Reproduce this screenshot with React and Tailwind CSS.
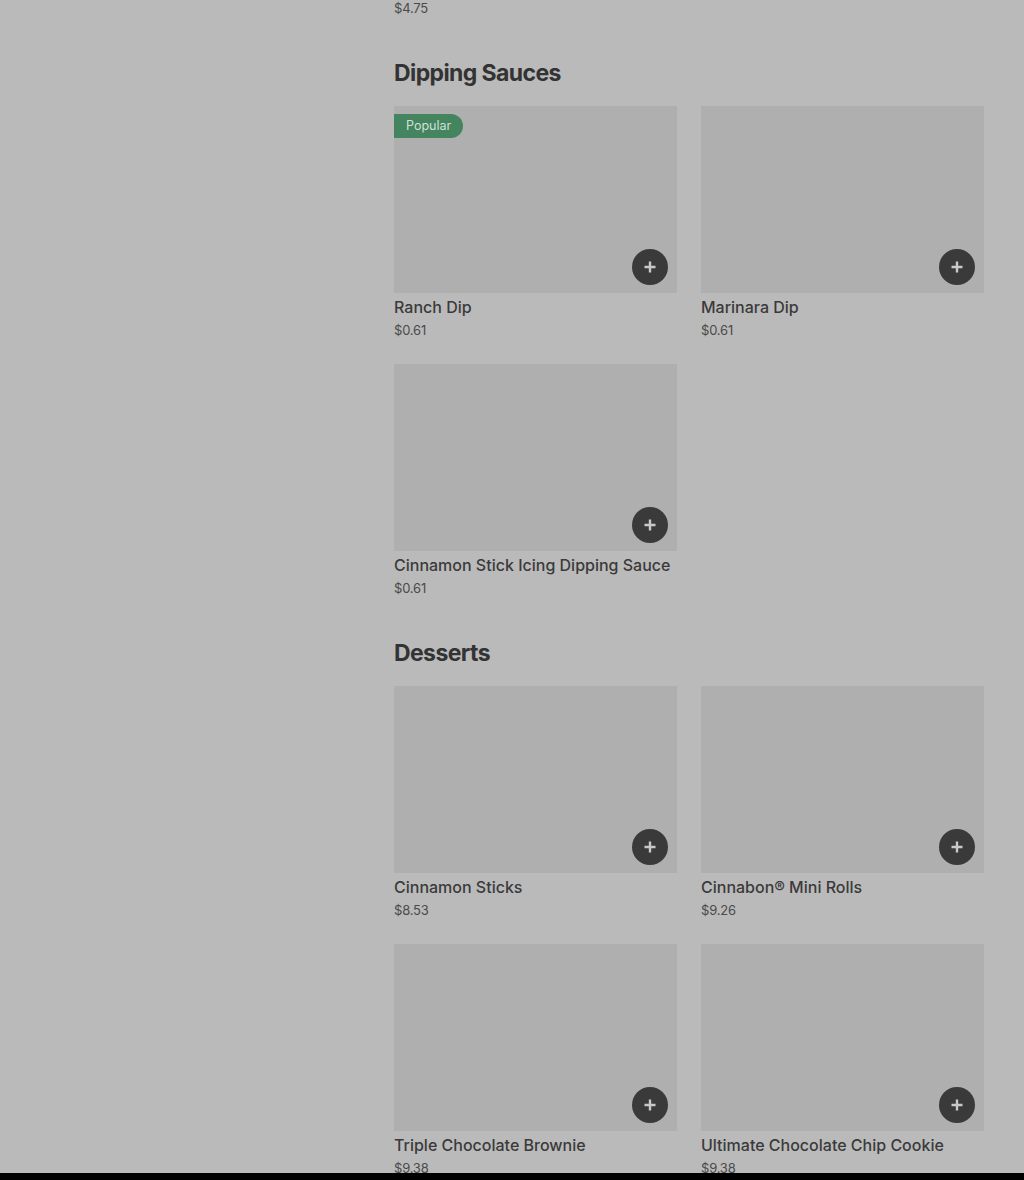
const sections = [
  {
    title: 'Dipping Sauces',
    items: [
      { name: 'Ranch Dip', price: '$0.61', popular: true },
      { name: 'Marinara Dip', price: '$0.61' },
      { name: 'Cinnamon Stick Icing Dipping Sauce', price: '$0.61' },
    ],
  },
  {
    title: 'Desserts',
    items: [
      { name: 'Cinnamon Sticks', price: '$8.53' },
      { name: 'Cinnabon® Mini Rolls', price: '$9.26' },
      { name: 'Triple Chocolate Brownie', price: '$9.38' },
      { name: 'Ultimate Chocolate Chip Cookie', price: '$9.38' },
    ],
  },
]

function PlusButton() {
  return (
    <button className="absolute bottom-[8px] right-[9px] grid h-9 w-9 place-items-center rounded-full bg-[#3a3a3a]">
      <svg width="14" height="14" viewBox="0 0 14 14" fill="none">
        <path d="M7 1.5v11M1.5 7h11" stroke="#c9c9c9" strokeWidth="2.4" />
      </svg>
    </button>
  )
}

function ItemCard({ item }) {
  return (
    <div className="flex flex-col">
      <div className="relative h-[187px] w-full bg-[#afafaf]">
        {item.popular && (
          <span className="absolute left-0 top-[8px] flex h-6 items-center rounded-r-full bg-[#44845f] pl-3 pr-3 text-[12.5px] text-[#cfe0d5]">
            Popular
          </span>
        )}
        <PlusButton />
      </div>
      <p className="mt-1 text-[16px] font-medium leading-5 text-[#3a3a3a]">{item.name}</p>
      <p className="mt-[3px] text-[13px] leading-5 tracking-[-0.2px] text-[#4a4a4a]">{item.price}</p>
    </div>
  )
}

export default function App() {
  return (
    <div
      className="min-h-screen overflow-hidden bg-[#bababa]"
      style={{ fontFamily: 'Inter, "Noto Sans", sans-serif' }}
    >
      <div className="ml-[394px] w-[590px] pb-10">
        <p className="-mt-[2px] text-[13px] leading-5 tracking-[-0.2px] text-[#4a4a4a]">$4.75</p>
        {sections.map((section) => (
          <section key={section.title} className="mt-[39px]">
            <h2 className="pt-[1px] text-[23px] font-bold leading-[31px] tracking-[-0.6px] text-[#333333]">
              {section.title}
            </h2>
            <div className="mt-[17px] grid grid-cols-2 gap-x-6 gap-y-6">
              {section.items.map((item) => (
                <ItemCard key={item.name} item={item} />
              ))}
            </div>
          </section>
        ))}
      </div>
      <div className="fixed bottom-0 left-0 right-0 h-[7px] bg-black" />
    </div>
  )
}
